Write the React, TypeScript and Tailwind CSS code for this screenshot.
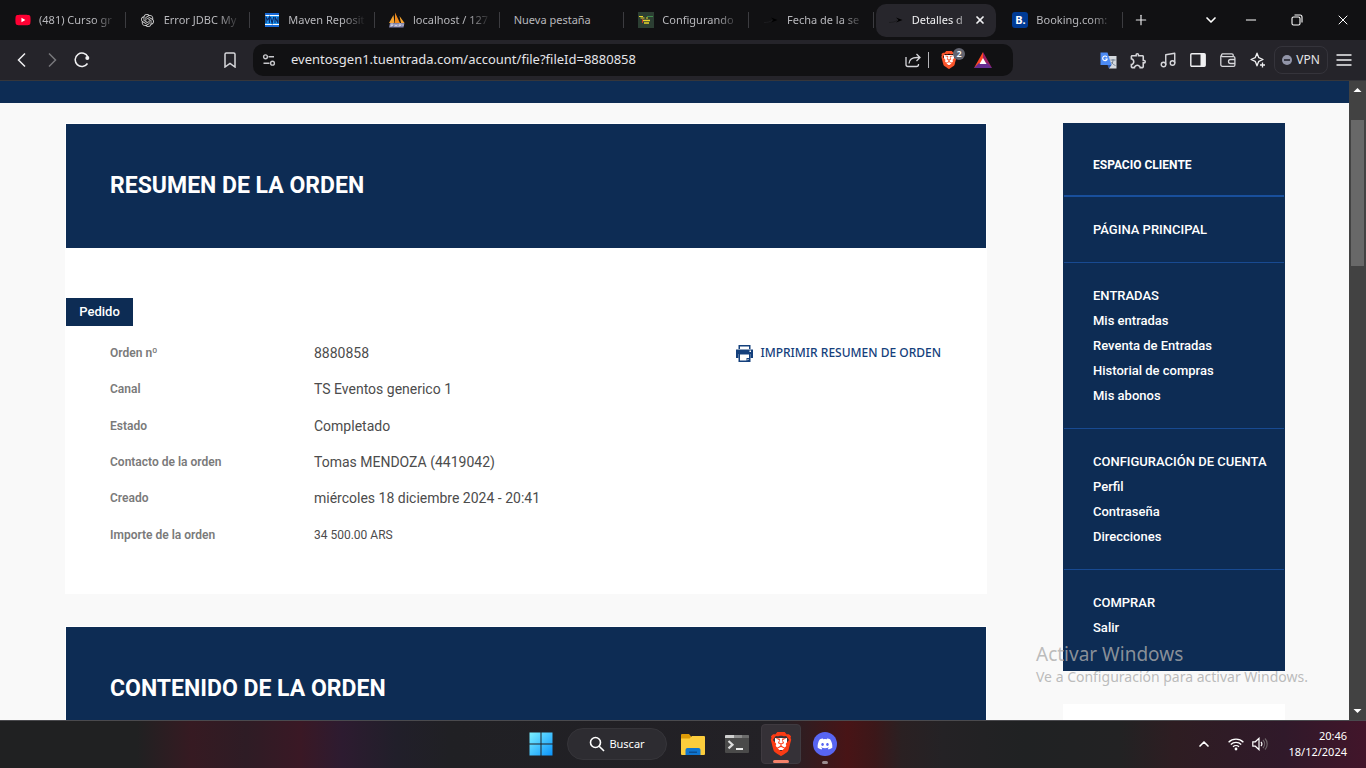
import type { ReactNode } from "react";
import { ChevronDown, ChevronUp, Minus, Music, Plus, X } from "lucide-react";
import { FaDiscord, FaYoutube } from "react-icons/fa6";
import { MdOutlineExtension } from "react-icons/md";
import { SiBrave, SiOpenai } from "react-icons/si";

type TabInfo = { title: string; icon?: ReactNode; active?: boolean };

function MavenIcon() {
  return (
    <svg viewBox="0 0 16 16" className="size-4">
      <rect x="1" y="1" width="14" height="14" fill="#fff" />
      <rect x="1" y="1" width="14" height="2" fill="#1769d6" />
      <rect x="1" y="4" width="14" height="8" fill="#2196f3" />
      <rect x="1" y="13" width="14" height="2" fill="#1769d6" />
      <path
        d="M2 11V5l1.7 3L5.4 5v6M6.5 5l1.6 6 1.6-6M11 11V5l3 6V5"
        fill="none"
        stroke="#0a2a66"
        strokeWidth="1.1"
      />
    </svg>
  );
}

function PhpMyAdminIcon() {
  return (
    <svg viewBox="0 0 16 16" className="size-4">
      <path d="M0 11 4.5 3 5.5 11Z" fill="#f7a632" />
      <path d="M6 11V.5L11 11Z" fill="#f08a1c" />
      <path d="M10.5 4 15.5 11H12Z" fill="#f7a632" />
      <path d="M1 11h14.5l-1 4.5H0z" fill="#7c7fa8" />
      <path
        d="M2 15v-3h2v1.5H2M6 15v-3m0 1.5h2M8 12v3M10 15v-3h2v1.5h-2M14 12v2"
        fill="none"
        stroke="#d8d8e4"
        strokeWidth=".8"
      />
    </svg>
  );
}

function GamesIcon() {
  return (
    <svg viewBox="0 0 16 16" className="size-4">
      <rect width="16" height="16" fill="#2c3f33" />
      <path d="M1 4.5h4M2.5 6h4M8 6h2" stroke="#e9d62c" strokeWidth="1.2" />
      <path d="M5 8.5h7M6 11h5" stroke="#e9d62c" strokeWidth="1.4" />
      <path d="M9 4.5h6" stroke="#3f8d4c" strokeWidth="1" />
      <path d="M4.5 7v4" stroke="#c2392b" strokeWidth="1" />
    </svg>
  );
}

function SwooshIcon() {
  return (
    <svg viewBox="0 0 16 16" className="size-4">
      <path d="M8 5.5 14.5 8 8 10.5l2.5-2.5z" fill="#000" />
      <path d="M1 10.5c3 0 6-.5 8-2" fill="none" stroke="#1d1d20" strokeWidth="1" />
    </svg>
  );
}

function BookingIcon() {
  return (
    <span className="flex size-4 items-center justify-center rounded-[3px] bg-[#003b95] text-[11px] font-bold leading-4 text-white">
      B.
    </span>
  );
}

const tabs: TabInfo[] = [
  {
    title: "(481) Curso gr",
    icon: (
      <span className="relative flex size-4 items-center justify-center">
        <span className="absolute size-2 bg-white" />
        <FaYoutube className="relative size-4 text-[#ff0033]" />
      </span>
    ),
  },
  { title: "Error JDBC My", icon: <SiOpenai className="size-[13px] text-[#d8d8d8]" /> },
  { title: "Maven Reposit", icon: <MavenIcon /> },
  { title: "localhost / 127", icon: <PhpMyAdminIcon /> },
  { title: "Nueva pestaña" },
  { title: "Configurando", icon: <GamesIcon /> },
  { title: "Fecha de la se", icon: <SwooshIcon /> },
  { title: "Detalles d", icon: <SwooshIcon />, active: true },
  { title: "Booking.com:", icon: <BookingIcon /> },
];

function Tab({ title, icon, active }: TabInfo) {
  return (
    <div
      className={
        active
          ? "mx-0.5 flex h-[33px] min-w-0 items-center rounded-[10px] bg-[#27262c] pr-2 pl-3 text-[#f0f0f2]"
          : "flex h-[33px] min-w-0 items-center pl-3.5 text-[#b8b8bc]"
      }
    >
      {icon && <span className="mr-2 flex size-4 shrink-0 items-center justify-center">{icon}</span>}
      <button
        type="button"
        className={
          icon
            ? "min-w-0 flex-1 overflow-hidden text-left whitespace-nowrap [mask-image:linear-gradient(to_right,#000_70%,transparent)]"
            : "min-w-0 flex-1 text-left whitespace-nowrap"
        }
      >
        {title}
      </button>
      {active ? (
        <button type="button" aria-label="Cerrar pestaña" className="flex w-4 shrink-0 justify-center">
          <X className="size-3" strokeWidth={3.5} />
        </button>
      ) : (
        <span className="ml-2 h-4 w-px shrink-0 bg-[#3c3c40]" />
      )}
    </div>
  );
}

function TabStrip() {
  return (
    <header className="flex h-10 shrink-0 items-center bg-[#111113] text-[11px] text-[#e6e6e8]">
      <div className="grid flex-1 grid-cols-9 pl-px">
        {tabs.map((tab) => (
          <Tab key={tab.title} {...tab} />
        ))}
      </div>
      <button type="button" aria-label="Nueva pestaña" className="flex w-9 justify-center">
        <Plus className="size-4" strokeWidth={1.8} />
      </button>
      <button type="button" aria-label="Buscar pestañas" className="ml-[35px] flex w-[34px] justify-center">
        <ChevronDown className="size-4 text-white" strokeWidth={2.5} />
      </button>
      <button type="button" aria-label="Minimizar" className="flex w-[46px] justify-center">
        <Minus className="size-4 text-white" strokeWidth={1.5} />
      </button>
      <button type="button" aria-label="Restaurar" className="flex w-[46px] justify-center">
        <svg viewBox="0 0 12 12" className="size-3" fill="none" stroke="#fff" strokeWidth="1.1">
          <rect x="1" y="3" width="8" height="8" rx="1.5" />
          <path d="M3.5 1H9a2 2 0 0 1 2 2v5.5" />
        </svg>
      </button>
      <button type="button" aria-label="Cerrar" className="flex w-[46px] justify-center">
        <X className="size-4 text-white" strokeWidth={1.5} />
      </button>
    </header>
  );
}

function IconButton({ label, children }: { label: string; children: ReactNode }) {
  return (
    <button type="button" aria-label={label} className="flex h-8 w-[30px] shrink-0 items-center justify-center">
      {children}
    </button>
  );
}

function Toolbar() {
  return (
    <div className="flex h-[41px] shrink-0 items-center border-b border-[#36363a] bg-[#25242a] text-[#d6d6da]">
      <div className="flex w-[245px] items-center pl-[7px]">
        <IconButton label="Atrás">
          <svg viewBox="0 0 16 16" className="size-4" fill="none" stroke="#f0f0f2" strokeWidth="1.5">
            <path d="M11 1.5 4.5 8l6.5 6.5" />
          </svg>
        </IconButton>
        <IconButton label="Adelante">
          <svg viewBox="0 0 16 16" className="size-4" fill="none" stroke="#77777c" strokeWidth="1.5">
            <path d="M5 1.5 11.5 8 5 14.5" />
          </svg>
        </IconButton>
        <IconButton label="Recargar">
          <svg viewBox="0 0 16 16" className="size-4" fill="none" stroke="#f0f0f2" strokeWidth="1.5">
            <path d="M13.5 11.5A6.7 6.7 0 1 1 14 5" />
            <circle cx="13.3" cy="6" r="2" fill="#f0f0f2" stroke="none" />
          </svg>
        </IconButton>
        <span className="flex-1" />
        <IconButton label="Guardar marcador">
          <svg viewBox="0 0 16 16" className="size-4" fill="none" stroke="currentColor" strokeWidth="1.5">
            <path d="M3 2.3C3 1.5 3.5 1 4.3 1h7.4c.8 0 1.3.5 1.3 1.3V15l-5-3.5L3 15z" />
          </svg>
        </IconButton>
      </div>

      <div className="mx-2 flex h-8 min-w-0 flex-1 items-center rounded-[10px] bg-[#111113] pr-3.5 pl-2">
        <button type="button" aria-label="Información del sitio" className="flex w-4 justify-center">
          <svg viewBox="0 0 14 14" className="size-3.5" fill="none" stroke="#c8c8cc" strokeWidth="1.4">
            <circle cx="3.5" cy="3.8" r="1.9" />
            <path d="M6.5 3.8H12M1.5 10.2h6" />
            <circle cx="10.5" cy="10.2" r="1.9" />
          </svg>
        </button>
        <input
          type="text"
          aria-label="Dirección"
          defaultValue="eventosgen1.tuentrada.com/account/file?fileId=8880858"
          className="ml-3.5 min-w-0 flex-1 bg-transparent text-[13px] text-[#e4e4e8] outline-none"
        />
        <IconButton label="Compartir">
          <svg viewBox="0 0 16 16" className="size-4" fill="none" stroke="currentColor" strokeWidth="1.3">
            <path d="M1 5v7.5a2 2 0 0 0 2 2h8.5a2 2 0 0 0 2-2V12" />
            <path d="M4 11.5c.3-4 3-6 8-6h3M11.5 2 15 5.5 11.5 9" />
          </svg>
        </IconButton>
        <span className="h-4 w-px bg-[#b4b4b8]" />
        <button type="button" aria-label="Brave Shields" className="relative ml-1 flex size-8 items-center justify-center">
          <span className="absolute size-2.5 bg-white" />
          <SiBrave className="relative size-[18px] text-[#fb542b]" />
          <span className="absolute top-1 right-0 flex size-3 items-center justify-center rounded-full bg-[#62646f] text-[9px] leading-3 font-semibold text-white">
            2
          </span>
        </button>
        <button type="button" aria-label="Brave Rewards" className="ml-0.5 flex size-8 items-center justify-center">
          <svg viewBox="0 0 18 16" className="h-4 w-[18px]">
            <path d="M9 0 0 16 9 10.5Z" fill="#ff4724" />
            <path d="M9 0 18 16 9 10.5Z" fill="#9e1f63" />
            <path d="M0 16h18L13 11H5Z" fill="#662d91" />
            <path d="M9 6 5.5 12h7Z" fill="#fff" />
          </svg>
        </button>
      </div>

      <div className="flex w-[345px] items-center justify-end pr-[7px]">
        <IconButton label="Traductor">
          <svg viewBox="0 0 17 17" className="size-[17px]">
            <path d="M7 4h9.5v12.5H9z" fill="#d5d9de" />
            <path
              d="M10.5 8h5M13 7v1c0 3-1.5 4.5-3 5.5M11.5 10c1 2 2.5 3 4 3.5"
              fill="none"
              stroke="#6c7b8c"
              strokeWidth=".9"
            />
            <path d="M.5.5h7l4 12.5H.5z" fill="#4c8bf5" />
            <path d="M7.5 13h4L9 16.5z" fill="#2b5bb5" />
            <path d="M7 5.2A2.3 2.3 0 1 0 7.2 7H5.3" fill="none" stroke="#fff" strokeWidth="1.1" />
          </svg>
        </IconButton>
        <IconButton label="Extensiones">
          <MdOutlineExtension className="size-[19px]" />
        </IconButton>
        <IconButton label="Multimedia">
          <Music className="size-[18px]" strokeWidth={1.9} />
        </IconButton>
        <IconButton label="Panel lateral">
          <svg viewBox="0 0 16 14" className="h-3.5 w-4">
            <rect x=".8" y=".8" width="14.4" height="12.4" rx="1" fill="none" stroke="#f0f0f2" strokeWidth="1.4" />
            <rect x="10.5" y="1" width="4.5" height="12" fill="#f0f0f2" />
          </svg>
        </IconButton>
        <IconButton label="Cartera">
          <svg viewBox="0 0 16 14" className="h-3.5 w-4" fill="none" stroke="currentColor" strokeWidth="1.3">
            <path d="M13.2 3.6V2.1A1.3 1.3 0 0 0 11.900.8H2.400a1.600 1.600 0 0 0 0 2.900h11.200a1.300 1.300 0 0 1 1.300 1.300v7a1.300 1.300 0 0 1-1.300 1.300H2.400A1.600 1.600 0 0 1 .8 11.600V2.400" />
            <path d="M15 6.5h-4.5a2 2 0 0 0 0 4H15" />
          </svg>
        </IconButton>
        <IconButton label="Asistente">
          <svg
            viewBox="0 0 16 16"
            className="size-4"
            fill="none"
            stroke="#f0f0f2"
            strokeWidth="1.3"
            strokeLinejoin="round"
          >
            <path d="M7 1.2 8.8 5.7 13 7.5 8.8 9.3 7 13.8 5.2 9.3 1 7.5 5.2 5.7Z" />
            <path d="M12.5 10.5v5M10 13h5" />
          </svg>
        </IconButton>
        <button
          type="button"
          className="mx-px flex h-7 w-[54px] shrink-0 items-center justify-center gap-1 rounded-lg border border-[#35343b] text-xs text-[#e6e6e8]"
        >
          <span className="flex size-2.5 items-center justify-center rounded-full bg-[#9295a8]">
            <span className="h-0.5 w-1.5 bg-[#3a3b47]" />
          </span>
          VPN
        </button>
        <IconButton label="Menú">
          <svg viewBox="0 0 16 14" className="h-3.5 w-4" stroke="#f0f0f2" strokeWidth="1.3">
            <path d="M.5 2h15M.5 7h15M.5 12h15" />
          </svg>
        </IconButton>
      </div>
    </div>
  );
}

const orderRows = [
  ["Orden nº", "8880858"],
  ["Canal", "TS Eventos generico 1"],
  ["Estado", "Completado"],
  ["Contacto de la orden", "Tomas MENDOZA (4419042)"],
  ["Creado", "miércoles 18 diciembre 2024 - 20:41"],
  ["Importe de la orden", "34 500.00 ARS"],
];

function SectionHeading({ children }: { children: ReactNode }) {
  return (
    <h2 className="flex h-[124px] items-center bg-[#0d2c54] px-11 text-[23px] font-bold text-white">{children}</h2>
  );
}

function OrderSummary() {
  return (
    <section className="border border-white bg-white pb-10">
      <SectionHeading>RESUMEN DE LA ORDEN</SectionHeading>
      <h3 className="mt-[50px] flex h-7 w-[67px] items-center justify-center bg-[#0d2c54] text-[13px] font-medium text-white">
        Pedido
      </h3>
      <div className="mt-[9px] flex items-start justify-between pr-[45px] pl-11">
        <dl className="grid h-[218px] grid-cols-[204px_auto] grid-rows-6 items-center text-[#4c4c4c]">
          {orderRows.map(([label, value]) => (
            <div key={label} className="col-span-2 grid grid-cols-subgrid items-center">
              <dt className="text-xs font-semibold text-[#7a7a7a]">{label}</dt>
              <dd className={label === "Importe de la orden" ? "text-xs" : "text-sm"}>{value}</dd>
            </div>
          ))}
        </dl>
        <a
          href="#imprimir"
          className="flex h-9 items-center gap-[7px] font-['Noto_Sans',sans-serif] text-xs font-medium text-[#14407c]"
        >
          <svg viewBox="0 0 17 17" className="size-[17px]">
            <path d="M2.5 0h12v4H13V1.5H4V4H2.5z" fill="#14407c" />
            <path d="M0 4.5h17V13h-2.5V9h-12v4H0z" fill="#14407c" />
            <rect x="13.5" y="5.5" width="1.5" height="1.5" fill="#fff" />
            <path d="M2.5 8h12v9h-12z" fill="#14407c" />
            <path d="M4 9.500h9v3.500h-2.500v2.500H4zM11.500 14H13l-1.500 1.500z" fill="#fff" />
          </svg>
          IMPRIMIR RESUMEN DE ORDEN
        </a>
      </div>
    </section>
  );
}

const menuGroups = [
  { items: ["PÁGINA PRINCIPAL"], box: "py-5" },
  {
    items: ["ENTRADAS", "Mis entradas", "Reventa de Entradas", "Historial de compras", "Mis abonos"],
    box: "border-t py-5",
  },
  { items: ["CONFIGURACIÓN DE CUENTA", "Perfil", "Contraseña", "Direcciones"], box: "border-t py-5" },
  { items: ["COMPRAR", "Salir"], box: "border-t pt-5 pb-[30px]" },
];

function Sidebar() {
  return (
    <aside className="flex w-[222px] shrink-0 flex-col gap-[33px]">
      <nav className="border border-[#0d2c54] bg-[#0d2c54] text-[13px] font-medium text-white">
        <h2 className="flex h-[73px] items-center border-b-2 border-[#184f9c] px-[29px] pt-2.5 text-xs font-bold">
          ESPACIO CLIENTE
        </h2>
        {menuGroups.map((group) => (
          <ul key={group.items[0]} className={`border-[#184a91] px-[29px] ${group.box}`}>
            {group.items.map((item) => (
              <li key={item} className="h-[25px] leading-[25px] whitespace-nowrap">
                <a href="#cuenta">{item}</a>
              </li>
            ))}
          </ul>
        ))}
      </nav>
      <div className="h-40 bg-white" />
    </aside>
  );
}

function Scrollbar() {
  return (
    <div className="flex w-[17px] shrink-0 flex-col items-center bg-[#424242]">
      <svg viewBox="0 0 17 17" className="size-[17px]">
        <path d="M4.5 11h8l-4-4z" fill="#fff" />
      </svg>
      <span className="mt-[22px] h-[146px] w-[13px] bg-[#686868]" />
      <span className="flex-1" />
      <svg viewBox="0 0 17 17" className="size-[17px]">
        <path d="M4.5 6h8l-4 4z" fill="#fff" />
      </svg>
    </div>
  );
}

type TaskButtonProps = { label: string; active?: boolean; marker?: string; children: ReactNode };

function TaskButton({ label, active, marker, children }: TaskButtonProps) {
  return (
    <button
      type="button"
      aria-label={label}
      className={
        active
          ? "relative flex size-10 items-center justify-center rounded border border-[#3f3a40] bg-[#353137]"
          : "relative flex size-10 items-center justify-center"
      }
    >
      {children}
      {marker && <span className={`absolute bottom-0 h-[3px] rounded-full ${marker}`} />}
    </button>
  );
}

function Taskbar() {
  return (
    <footer className="grid h-12 shrink-0 grid-cols-[1fr_auto_1fr] items-center bg-[linear-gradient(to_right,#202122_0%,#202122_10%,#361a22_14%,#2e1c25_18%,#3a1825_22%,#2d1b30_25%,#211f2a_29%,#202024_33%,#232126_57%,#481416_62%,#3c1719_64%,#2a2022_66%,#242225_69%,#202223_75%,#222223_82%,#2e1d22_86%,#30192a_94%,#42152a_100%)] text-white shadow-[inset_0_1px_#4a4a4e]">
      <span />
      <div className="flex items-center gap-1">
        <TaskButton label="Inicio">
          <svg viewBox="0 0 24 24" className="size-6">
            <defs>
              <linearGradient id="win" x1="0" y1="0" x2="1" y2="1">
                <stop offset="0" stopColor="#7df1ff" />
                <stop offset="1" stopColor="#0a93fb" />
              </linearGradient>
            </defs>
            <path
              d="M.5.5h11v11H.5zM12.5.5h11v11h-11zM.5 12.5h11v11H.5zM12.5 12.5h11v11h-11z"
              fill="url(#win)"
            />
          </svg>
        </TaskButton>
        <button
          type="button"
          className="mx-0.5 flex h-8 w-[100px] items-center justify-center gap-1 rounded-full border border-[#36353a] bg-[#2d2c31] text-[11px]"
        >
          <svg viewBox="0 0 16 16" className="size-4" fill="none" stroke="#fff" strokeWidth="1.6">
            <circle cx="6.5" cy="6.5" r="5" />
            <path d="m10.2 10.2 4.8 4.8" />
          </svg>
          Buscar
        </button>
        <TaskButton label="Explorador de archivos">
          <svg viewBox="0 0 24 24" className="size-6">
            <path d="M0 3a1 1 0 0 1 1-1h7l2.5 3H24v5H0z" fill="#dc9a07" />
            <path d="M0 6.5h8.5L11 4h12a1 1 0 0 1 1 1v17a1 1 0 0 1-1 1H1a1 1 0 0 1-1-1z" fill="#fccd3c" />
            <path d="M4.5 23v-5a2 2 0 0 1 2-2h11a2 2 0 0 1 2 2v5z" fill="#0f75cf" />
            <path d="M8 19.5h8V21H8z" fill="#0a4f93" />
          </svg>
        </TaskButton>
        <TaskButton label="Terminal">
          <svg viewBox="0 0 24 20" className="h-5 w-6">
            <rect y="1" width="24" height="18" rx="1" fill="#4a4a4a" />
            <path d="M0 2a1 1 0 0 1 1-1h8v3H0z" fill="#cfcfcf" />
            <path d="M9 1h8v3H9z" fill="#8c8c8c" />
            <path d="M17 1h6a1 1 0 0 1 1 1v2h-7z" fill="#6c6c6c" />
            <path d="m3.5 7 4 3.7-4 3.7" fill="none" stroke="#dcdcdc" strokeWidth="2.2" />
            <path d="M11 15h7" stroke="#fff" strokeWidth="1.8" />
          </svg>
        </TaskButton>
        <TaskButton label="Brave" active marker="w-4 bg-[#f5826a]">
          <span className="absolute size-3 bg-white" />
          <SiBrave className="relative size-6 text-[#fb3b14]" />
        </TaskButton>
        <TaskButton label="Discord" marker="w-1.5 bg-[#9c8d90]">
          <span className="flex size-6 items-center justify-center rounded-full bg-[#5865f2]">
            <FaDiscord className="size-4 text-white" />
          </span>
        </TaskButton>
      </div>
      <div className="flex items-center justify-end pr-[19px]">
        <button type="button" aria-label="Iconos ocultos" className="mr-4">
          <ChevronUp className="size-4" strokeWidth={2.5} />
        </button>
        <svg viewBox="0 0 16 14" className="mr-2 h-3.5 w-4" fill="none" stroke="#fff" strokeWidth="1.3">
          <path d="M.6 5.2a10.5 10.5 0 0 1 14.8 0M2.8 7.5a7.4 7.4 0 0 1 10.4 0M5 9.8a4.3 4.3 0 0 1 6 0" />
          <circle cx="8" cy="12" r="1.4" fill="#fff" stroke="none" />
        </svg>
        <svg viewBox="0 0 16 14" className="mr-[17px] h-3.5 w-4" fill="none" stroke="#fff" strokeWidth="1.2">
          <path d="M.8 4.8h2.5L7 1.3v11.4L3.3 9.2H.8zM9 5a3 3 0 0 1 0 4" />
          <path d="M11 3a6 6 0 0 1 0 8M13 1.5a8 8 0 0 1 0 11" stroke="#6d6468" />
        </svg>
        <time className="w-[62px] text-right text-[11px] leading-4">
          20:46
          <br />
          18/12/2024
        </time>
      </div>
    </footer>
  );
}

export default function App() {
  return (
    <div className="relative flex h-screen flex-col overflow-hidden font-['Noto_Sans',sans-serif]">
      <TabStrip />
      <Toolbar />
      <div className="flex min-h-0 flex-1 font-['Roboto',sans-serif]">
        <div className="min-w-0 flex-1 overflow-hidden bg-[#f9f9f9]">
          <div className="h-[22px] bg-[#0d2c54]" />
          <div className="flex items-start gap-[76px] pt-5 pr-16 pl-[65px]">
            <main className="flex min-w-0 flex-1 flex-col gap-8">
              <OrderSummary />
              <section className="border border-white bg-white">
                <SectionHeading>CONTENIDO DE LA ORDEN</SectionHeading>
              </section>
            </main>
            <Sidebar />
          </div>
        </div>
        <Scrollbar />
      </div>
      <Taskbar />
      <div className="pointer-events-none absolute right-[55px] bottom-[81px] w-[275px] whitespace-nowrap text-[#ababab]/80">
        <p className="text-[19px] leading-[26px]">Activar Windows</p>
        <p className="text-sm leading-5">Ve a Configuración para activar Windows.</p>
      </div>
    </div>
  );
}
